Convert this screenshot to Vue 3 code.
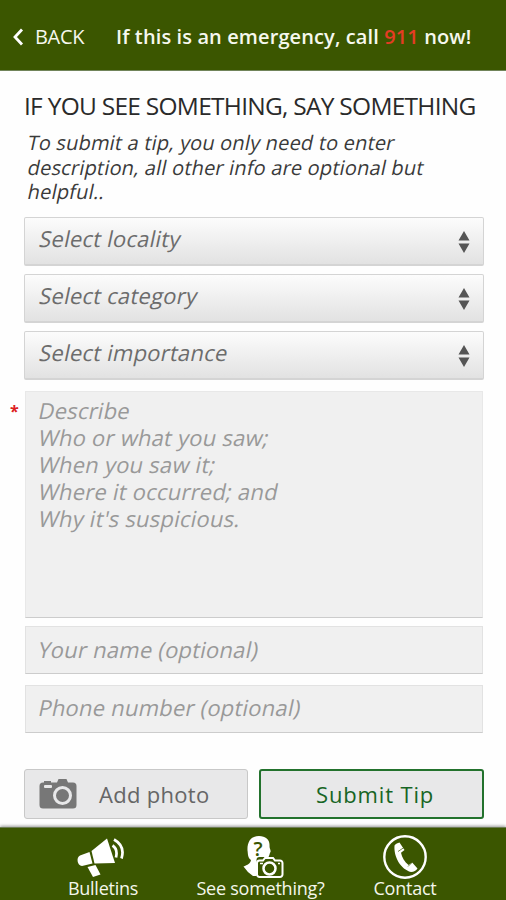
<script setup>
const selects = [
  { name: 'locality', label: 'Select locality' },
  { name: 'category', label: 'Select category' },
  { name: 'importance', label: 'Select importance' },
]
</script>

<template>
  <div class="screen">
    <header class="topbar">
      <div class="back">
        <svg class="chevron" viewBox="0 0 12 18"><path d="M10 1.5 3 9l7 7.5" /></svg>
        <span>BACK</span>
      </div>
      <div class="emergency">If this is an emergency, call <b>911</b> now!</div>
    </header>

    <main class="content">
      <h1>IF YOU SEE SOMETHING, SAY SOMETHING</h1>
      <p class="intro">
        <span class="slant">To submit a tip, you only need to enter</span>
        <span class="slant">description, all other info are optional but</span>
        <span class="slant">helpful..</span>
      </p>

      <div class="selects">
        <div v-for="s in selects" :key="s.name" class="select">
          <span class="slant">{{ s.label }}</span>
          <svg class="arrows" viewBox="0 0 12 22"><path d="M6 0 11.500 9.500H.5zM6 22 11.500 12.500H.5z" /></svg>
        </div>
      </div>

      <div class="describe">
        <span class="required">*</span>
        <div class="slant">Describe</div>
        <div class="slant">Who or what you saw;</div>
        <div class="slant">When you saw it;</div>
        <div class="slant">Where it occurred; and</div>
        <div class="slant">Why it's suspicious.</div>
      </div>

      <div class="field name"><span class="slant">Your name (optional)</span></div>
      <div class="field phone"><span class="slant">Phone number (optional)</span></div>

      <div class="buttons">
        <div class="btn photo">
          <svg class="camera" viewBox="0 0 38 32">
            <path d="M5 4.500V3h7v1.500h6L19.500 1h8L29 4.500h5a3.500 3.500 0 0 1 3.500 3.500v19a3.500 3.500 0 0 1-3.500 3.500H4A3.500 3.500 0 0 1 .5 27V8A3.500 3.500 0 0 1 4 4.500z" fill="#777" />
            <rect x="5" y="7" width="8" height="3" rx="1" fill="#e8e8e9" />
            <circle cx="23.500" cy="17.500" r="8" fill="#777" stroke="#e8e8e9" stroke-width="3" />
          </svg>
          <span>Add photo</span>
        </div>
        <div class="btn submit"><span>Submit Tip</span></div>
      </div>
    </main>

    <footer class="tabs">
      <div class="tab bulletins">
        <svg viewBox="0 0 50 44">
          <path d="M15.500 16 31 3.500 39 28 18.500 28.500z" fill="#fff" />
          <path d="M13.500 17 4 20.500C0 22 1 31 6 31l10.500-2.500z" fill="#fff" />
          <path d="m11.500 32 8-2 5 9.500-7.500 2.500z" fill="#fff" />
          <path d="M36.500 10.500q5.500 3.500 3.500 12M38 4.500q11.500 6.500 7.500 19" fill="none" stroke="#fff" stroke-width="2.700" />
        </svg>
        <span>Bulletins</span>
      </div>
      <div class="tab see">
        <svg viewBox="0 0 44 44">
          <path d="M17 1c7 0 11 4 10.500 10 0 3 1.500 4 1 6-1 1-1 5-3.500 7l-2 2v15H11Q5 37 1.500 31.500c4-1.500 7-3 7.500-6.500C5.500 23 6 18 5.500 15.500 5 7 9 1 17 1z" fill="#fff" />
          <text x="11.500" y="20.500" class="question">?</text>
          <rect x="14.500" y="22" width="28.500" height="21.500" rx="3" fill="#3b5600" />
          <path d="M17.500 25.500H21l2-2.500h8l2 2.500h5a2.500 2.500 0 0 1 2.500 2.500V39.500a2.500 2.500 0 0 1-2.500 2.500h-20.500A2.500 2.500 0 0 1 15 39.500V28a2.500 2.500 0 0 1 2.500-2.500z" fill="#3b5600" stroke="#fff" stroke-width="2" />
          <circle cx="27.500" cy="33.500" r="6" fill="none" stroke="#fff" stroke-width="2.500" />
          <path d="M18 28.500h3M36 28.500h2" stroke="#fff" stroke-width="1.500" />
        </svg>
        <span>See something?</span>
      </div>
      <div class="tab contact">
        <svg viewBox="0 0 44 44">
          <circle cx="22" cy="22" r="20.700" fill="none" stroke="#fff" stroke-width="2.400" />
          <path d="M11.500 10.500c1.500-2 3-2.500 5-3l5 7.500-3.500 2.700c1 5 3.500 9 7.500 12.300l3.700-2.500 5.300 6c-1.500 2.200-3.500 3.500-6.500 3.500C18 34.500 10.500 22 11.500 10.500z" fill="#fff" />
          <path d="m15 16.500 6-4M25 31.500l5-5" stroke="#3b5600" stroke-width=".7" />
        </svg>
        <span>Contact</span>
      </div>
    </footer>
  </div>
</template>

<style>
body { margin: 0; background: #fefefe; }
</style>

<style scoped>
.screen {
  width: 506px;
  height: 900px;
  display: flex;
  flex-direction: column;
  overflow: hidden;
  background: #fefefe;
  font-family: "Open Sans", "Noto Sans", sans-serif;
  white-space: nowrap;
}
.screen * { box-sizing: border-box; }
.slant { display: block; width: max-content; transform: skewX(-12deg); letter-spacing: .22px; }
.topbar {
  height: 71px;
  flex: none;
  display: flex;
  align-items: center;
  padding: 4px 0 0 12px;
  background: #3b5600;
  border-bottom: 1px solid #71845a;
  color: #f6f8ee;
  font-size: 20px;
  line-height: 28px;
}
.back { display: flex; align-items: center; width: 104px; gap: 11px; letter-spacing: -.3px; }
.chevron { width: 12px; height: 18px; fill: none; stroke: #fff; stroke-width: 2.8; }
.emergency { font-weight: 600; letter-spacing: .11px; }
.emergency b { color: #e43c24; font-weight: 600; }
.content { flex: 1; padding: 20px 22px 0 24px; }
h1 { margin: 0; font-size: 24.5px; line-height: 29px; font-weight: 400; color: #2a2a2a; letter-spacing: -.73px; }
.intro { margin: 11px 0 0 4px; height: 86px; font-size: 20px; line-height: 24.5px; color: #3a3a3a; }
.intro .slant { letter-spacing: .18px; }
.selects { display: flex; flex-direction: column; gap: 8px; }
.select {
  height: 49px;
  display: flex;
  align-items: center;
  justify-content: space-between;
  padding: 0 13px 6px 15px;
  border: 1px solid #d4d4d4;
  border-width: 1px 1px 2px;
  border-radius: 2px;
  background: linear-gradient(#fcfcfc, #e2e2e2);
  color: #6c6c6c;
  font-size: 22px;
}
.arrows { width: 12px; height: 22px; margin-top: 8px; fill: #555; }
.describe {
  position: relative;
  width: 458px;
  height: 227px;
  margin: 11px 0 0 1px;
  padding: 5px 13px;
  background: #f0f0f0;
  border: 1px solid #e8e8e8;
  border-bottom-color: #ccc;
  color: #999;
  font-size: 22px;
  line-height: 27px;
}
.required { position: absolute; left: -16px; top: 6px; font-size: 16px; line-height: 27px; font-weight: 700; color: #dd2020; }
.field {
  width: 458px;
  height: 48px;
  margin: 8px 0 0 1px;
  padding: 0 13px;
  background: #f0f0f0;
  border: 1px solid #e2e2e2;
  border-bottom-color: #ccc;
  color: #999;
  font-size: 22px;
  line-height: 44px;
}
.phone { margin-top: 11px; line-height: 43px; }
.buttons { display: flex; gap: 11px; margin-top: 36px; }
.btn { height: 50px; display: flex; align-items: center; background: #e8e8e9; border-radius: 3px; font-size: 22px; }
.photo { width: 224px; border: 1px solid #c8c8c8; color: #666; padding-left: 14px; gap: 22px; letter-spacing: .3px; }
.camera { width: 38px; height: 32px; }
.submit { width: 225px; border: 2px solid #23722d; color: #176524; padding-left: 55px; font-weight: 500; letter-spacing: .85px; }
.tabs {
  height: 73px;
  flex: none;
  position: relative;
  background: #3b5600;
  border-top: 1px solid #6d7d55;
  box-shadow: 0 -1px 3px rgba(0, 0, 0, .4);
  display: flex;
  color: #f4f6ec;
  font-size: 18px;
  letter-spacing: -.25px;
}
.tab { display: flex; flex-direction: column; align-items: center; padding-top: 7px; }
.tab svg { height: 44px; flex: none; }
.bulletins svg { margin-left: -4px; }
.see svg { margin-left: 6px; }
.tab span { line-height: 18px; }
.bulletins { width: 206px; }
.see { width: 109px; }
.contact { width: 180px; }
.question { font: 600 20px "Open Sans", sans-serif; fill: #3b5600; }
</style>
